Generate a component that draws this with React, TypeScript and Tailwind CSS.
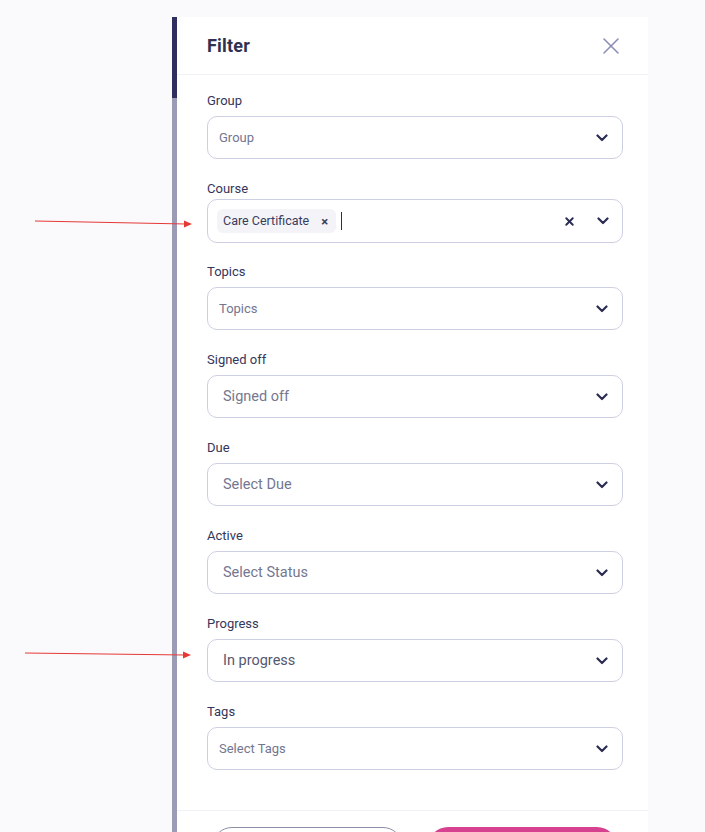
import { X } from 'lucide-react'

interface FieldProps {
  label: string
  value: string
  small?: boolean
  filled?: boolean
}

function Chevron() {
  return (
    <svg width="12" height="8" viewBox="0 0 12 8" className="flex-shrink-0">
      <path d="M1.5 1.5 6 6l4.5-4.5" fill="none" stroke="#2b2d52" strokeWidth="2.2" strokeLinecap="round" strokeLinejoin="round" />
    </svg>
  )
}

function SelectField({ label, value, small, filled }: FieldProps) {
  return (
    <div className="flex flex-col flex-shrink-0">
      <label className="h-5 leading-5 text-[13px] text-[#34365a]">{label}</label>
      <div className="mt-[5px] h-[43px] rounded-[10px] border border-[#cdd0e2] bg-white flex items-center justify-between pr-[14px]">
        <span
          className={
            small
              ? 'pl-[11px] text-[13px] text-[#73768f]'
              : `pl-[15px] text-[14.5px] ${filled ? 'text-[#55576f]' : 'text-[#74778f]'}`
          }
        >
          {value}
        </span>
        <Chevron />
      </div>
    </div>
  )
}

function Arrow({ x1, y1, x2, y2 }: { x1: number; y1: number; x2: number; y2: number }) {
  return (
    <g>
      <line x1={x1} y1={y1} x2={x2 - 6} y2={y2} stroke="#e53935" strokeWidth="1" />
      <path d={`M${x2} ${y2} L${x2 - 8} ${y2 - 3.5} L${x2 - 8} ${y2 + 3.5} Z`} fill="#e53935" />
    </g>
  )
}

export default function App() {
  return (
    <div className="relative w-[705px] h-[832px] overflow-hidden bg-[#fafafd] font-['Roboto',sans-serif]">
      <div className="ml-[172px] mt-[17px] w-[476px] h-[815px] flex">
        {/* left scroll strip */}
        <div className="w-[5px] flex flex-col flex-shrink-0">
          <div className="h-[81px] flex-shrink-0 bg-[#2e2f5e]" />
          <div className="flex-1 bg-[#9c9bb6]" />
        </div>

        <div className="flex-1 bg-white flex flex-col min-h-0 overflow-hidden">
          {/* header */}
          <div className="h-[58px] flex-shrink-0 flex items-center justify-between pl-[30px] pr-[26px] border-b border-[#f0f1f6]">
            <h1 className="text-[18px] font-bold text-[#2f3150] tracking-[0.2px]">Filter</h1>
            <X className="w-[28px] h-[28px] text-[#8a8fb5] mr-[-3px]" strokeWidth={1.3} />
          </div>

          {/* body */}
          <div className="flex-shrink-0 pl-[30px] pr-[25px] pt-4 pb-10 flex flex-col gap-5">
            <SelectField label="Group" value="Group" small />

            <div className="flex flex-col flex-shrink-0 -mb-[1px]">
              <label className="h-5 leading-5 text-[13px] text-[#34365a]">Course</label>
              <div className="h-[44px] rounded-[10px] border border-[#cdd0e2] bg-white flex items-center pl-[9px] pr-[13px]">
                <span className="h-6 pl-[6px] pr-[8px] rounded-[6px] bg-[#f3f3f8] flex items-center gap-[12px] text-[12.5px] text-[#3a3c5c]">
                  Care Certificate
                  <span className="text-[13px] font-bold leading-none text-[#3a3c5c]">×</span>
                </span>
                <span className="ml-[5px] w-px h-[18px] bg-[#2b2d52]" />
                <span className="flex-1" />
                <X className="w-[13px] h-[13px] text-[#2b2d52]" strokeWidth={3.5} />
                <span className="ml-[21px]">
                  <Chevron />
                </span>
              </div>
            </div>

            <SelectField label="Topics" value="Topics" small />
            <SelectField label="Signed off" value="Signed off" />
            <SelectField label="Due" value="Select Due" />
            <SelectField label="Active" value="Select Status" />
            <SelectField label="Progress" value="In progress" filled />
            <SelectField label="Tags" value="Select Tags" small />
          </div>

          {/* footer */}
          <div className="flex-shrink-0 border-t border-[#f0f1f6] pt-4 pl-[35px] pr-[31px] flex gap-[25px]">
            <button className="h-10 w-[191px] rounded-full border border-[#8d8fa8] bg-white" />
            <button className="h-10 w-[190px] rounded-full bg-[#d6428f]" />
          </div>
        </div>
      </div>

      {/* annotation arrows */}
      <svg className="absolute inset-0 pointer-events-none" width="705" height="832">
        <Arrow x1={35} y1={221} x2={192} y2={224} />
        <Arrow x1={25} y1={653} x2={191} y2={655} />
      </svg>
    </div>
  )
}
